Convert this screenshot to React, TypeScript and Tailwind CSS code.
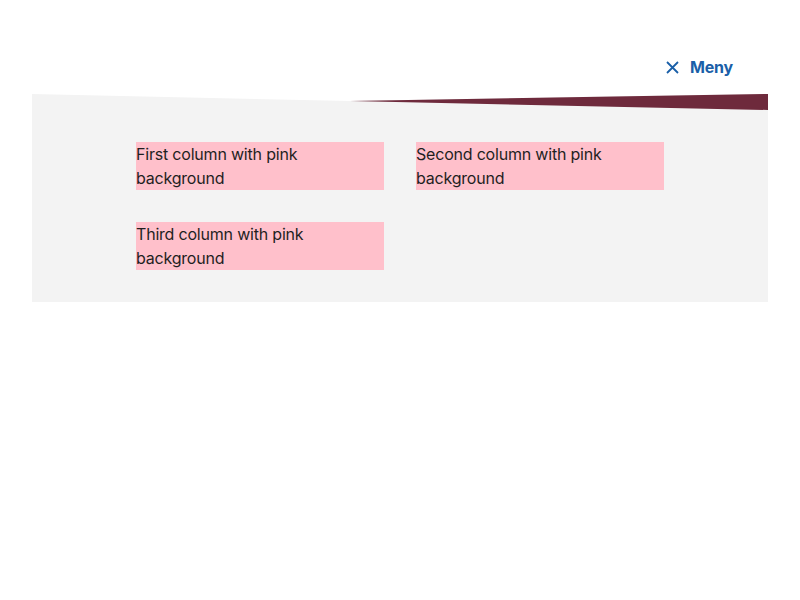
import React from "react";

export default function App() {
  return (
    <div className="min-h-[600px] bg-white" style={{ fontFamily: "Inter, 'Noto Sans', sans-serif" }}>
      <div className="mx-8">
        <div className="flex h-[94px] items-start justify-end pr-[35px] pt-[55px]">
          <button className="flex items-center gap-[11px] text-[16px] font-bold leading-6 tracking-[-0.2px] text-[#1a5fa8]">
            <svg width="13" height="13" viewBox="0 0 13 13" fill="none" stroke="#1a5fa8" strokeWidth="1.8">
              <path d="M1 1 L12 12 M12 1 L1 12" />
            </svg>
            <span>Meny</span>
          </button>
        </div>
        <div className="relative bg-[#f3f3f3] pt-12 pb-8">
          <svg className="absolute left-0 top-0" width="736" height="16" viewBox="0 0 736 16" preserveAspectRatio="none">
            <polygon points="0,0 736,0 318,7" fill="#ffffff" />
            <polygon points="318,7 736,0 736,16" fill="#6e2a3c" />
          </svg>
          <div className="mx-auto grid w-[528px] grid-cols-2 gap-8 text-[16px] leading-6 tracking-[-0.2px] text-[#1f1f1f]">
            <div className="bg-[#ffc0cb]">First column with pink background</div>
            <div className="bg-[#ffc0cb]">Second column with pink background</div>
            <div className="bg-[#ffc0cb]">Third column with pink background</div>
          </div>
        </div>
      </div>
    </div>
  );
}
